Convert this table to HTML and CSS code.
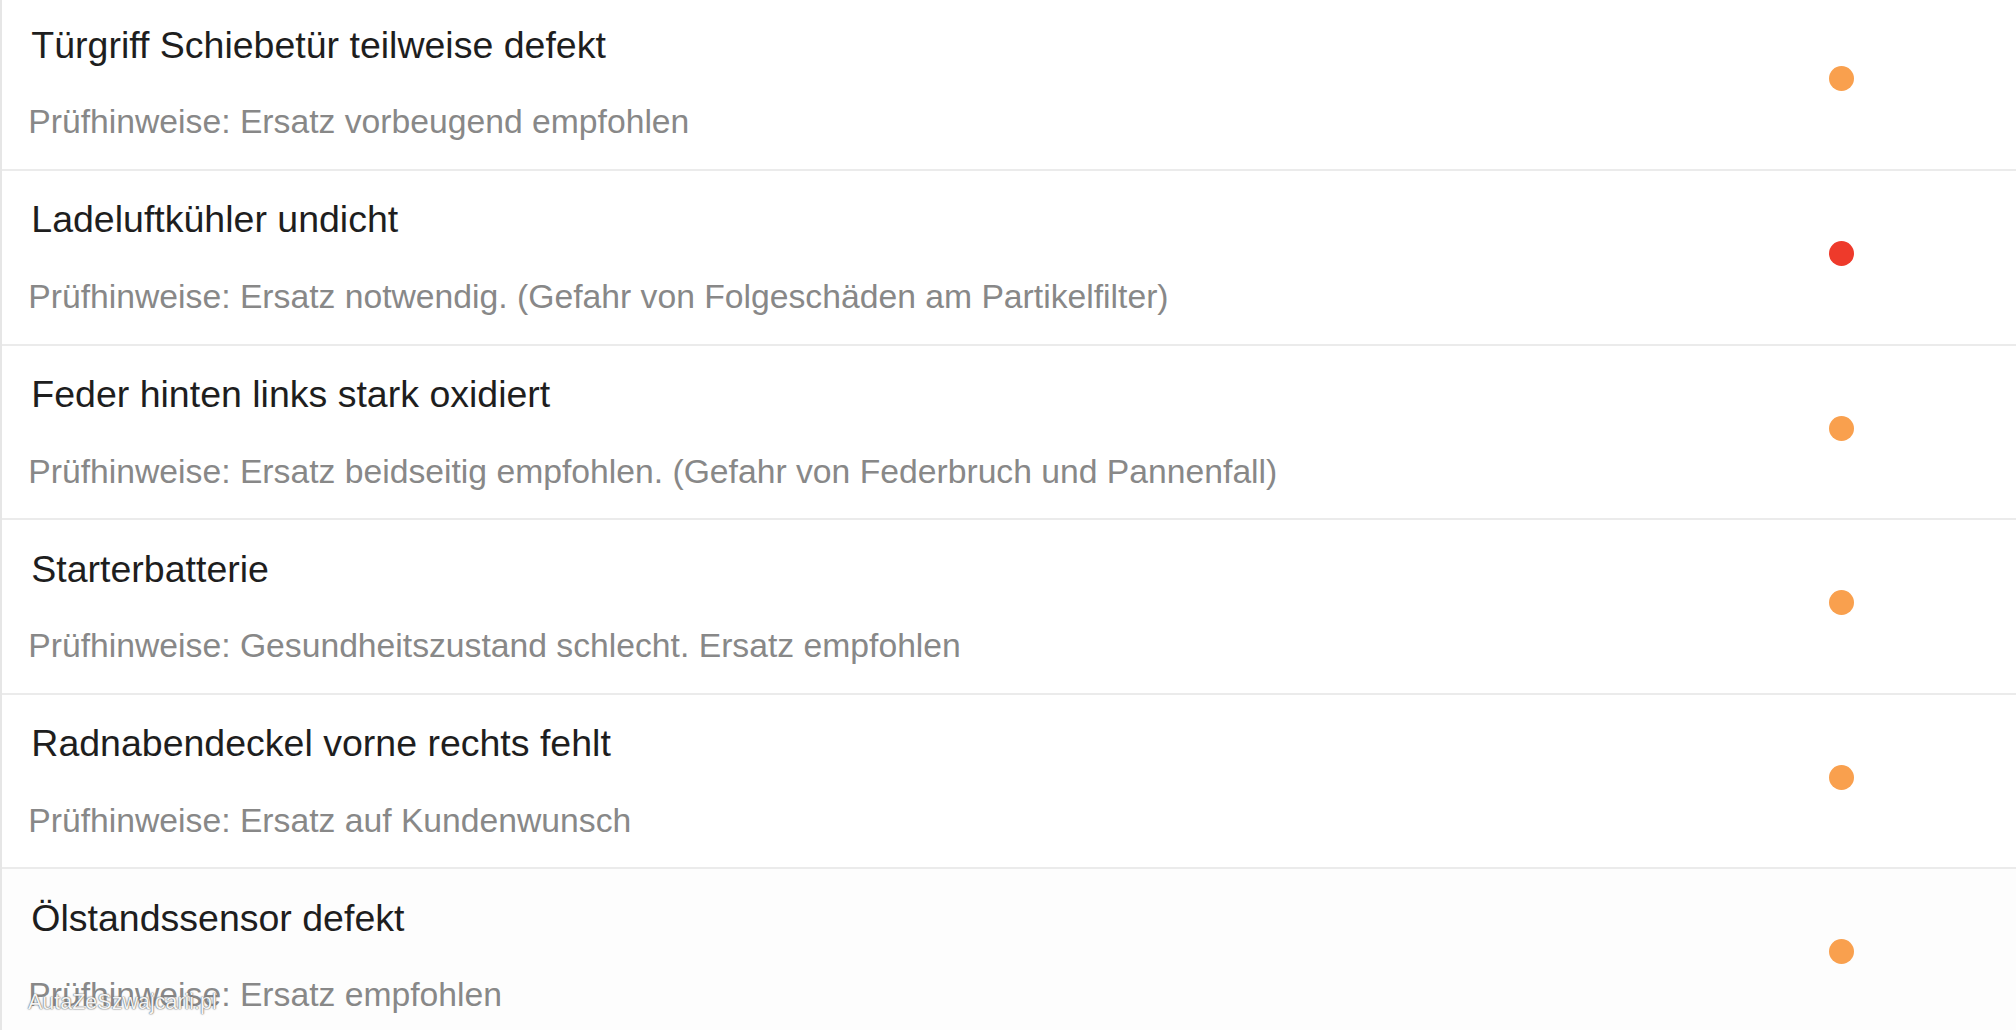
FILE: index.html
```html
<!DOCTYPE html>
<html lang="de">
<head>
<meta charset="utf-8">
<title>Prüfhinweise</title>
<link rel="stylesheet" href="styles.css">
</head>
<body>
<div class="page">
  <ul class="list">
    <li class="row">
      <div class="text">
        <div class="title">Türgriff Schiebetür teilweise defekt</div>
        <div class="note">Prüfhinweise: Ersatz vorbeugend empfohlen</div>
      </div>
      <span class="dot dot-orange"></span>
    </li>
    <li class="row">
      <div class="text">
        <div class="title">Ladeluftkühler undicht</div>
        <div class="note">Prüfhinweise: Ersatz notwendig. (Gefahr von Folgeschäden am Partikelfilter)</div>
      </div>
      <span class="dot dot-red"></span>
    </li>
    <li class="row">
      <div class="text">
        <div class="title">Feder hinten links stark oxidiert</div>
        <div class="note">Prüfhinweise: Ersatz beidseitig empfohlen. (Gefahr von Federbruch und Pannenfall)</div>
      </div>
      <span class="dot dot-orange"></span>
    </li>
    <li class="row">
      <div class="text">
        <div class="title">Starterbatterie</div>
        <div class="note">Prüfhinweise: Gesundheitszustand schlecht. Ersatz empfohlen</div>
      </div>
      <span class="dot dot-orange"></span>
    </li>
    <li class="row">
      <div class="text">
        <div class="title">Radnabendeckel vorne rechts fehlt</div>
        <div class="note">Prüfhinweise: Ersatz auf Kundenwunsch</div>
      </div>
      <span class="dot dot-orange"></span>
    </li>
    <li class="row row-last">
      <div class="text">
        <div class="title">Ölstandssensor defekt</div>
        <div class="note">Prüfhinweise: Ersatz empfohlen</div>
      </div>
      <span class="dot dot-orange"></span>
    </li>
  </ul>
  <div class="watermark">AutaZeSzwajcarii.pl</div>
</div>
</body>
</html>
```
FILE: styles.css
```css
html, body {
  margin: 0;
  padding: 0;
  background: #ffffff;
  overflow: hidden;
  height: 100%;
}

.page {
  position: relative;
  width: 2016px;
  height: 1030px;
  overflow: hidden;
  font-family: "Liberation Sans", Arial, sans-serif;
}

.list {
  list-style: none;
  margin: -3.7px 0 0 0;
  padding: 0;
  border-left: 2px solid #e6e6e6;
}

.row {
  display: flex;
  align-items: flex-start;
  box-sizing: border-box;
  height: 174.6px;
  padding: 26.5px 161.8px 0 0;
  border-bottom: 2px solid #ebebeb;
}

.row-last {
  background: #fdfdfd;
}

.text {
  flex: 1;
  display: flex;
  flex-direction: column;
  gap: 33.5px;
}

.title {
  font-size: 37.5px;
  line-height: 1.2;
  color: #1e1e1e;
  padding-left: 29.3px;
}

.note {
  font-size: 33.7px;
  line-height: 1.2;
  color: #888888;
  padding-left: 26.3px;
}

.dot {
  flex: none;
  width: 25px;
  height: 25px;
  border-radius: 50%;
  margin-top: 43.5px;
}

.dot-orange {
  background: #f9a04e;
}

.dot-red {
  background: #ee3a2b;
}

.watermark {
  position: absolute;
  left: 28px;
  top: 992px;
  font-size: 21.5px;
  line-height: 1;
  color: rgba(255, 255, 255, 0.95);
  text-shadow: 0 0 1px #555, 0 0 2px #777;
}
```
